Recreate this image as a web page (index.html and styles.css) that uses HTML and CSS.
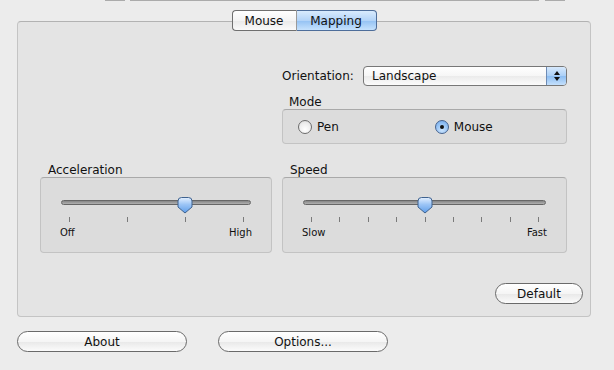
FILE: index.html
```html
<!DOCTYPE html>
<html lang="en">
<head>
  <meta charset="UTF-8" />
  <title>Mouse — Mapping</title>
  <link rel="stylesheet" href="styles.css">
</head>
<body>
  <!-- bottom edges of the controls above, cut off by the window -->
  <div class="top-edge">
    <span class="edge edge-a"></span>
    <span class="edge edge-b"></span>
    <span class="edge edge-c"></span>
  </div>

  <div class="tab-view">
    <div class="tabs">
      <button class="tab">Mouse</button>
      <button class="tab selected">Mapping</button>
    </div>

    <div class="tab-pane">
      <div class="pane-grid">
        <div></div>

        <div class="mapping">
          <div class="field-row">
            <span class="field-label">Orientation:</span>
            <div class="popup">
              <span class="popup-value">Landscape</span>
              <span class="popup-arrows">
                <svg width="8" height="12" viewBox="0 0 8 12">
                  <path d="M4 1 L7 5 H1 Z" fill="#111" />
                  <path d="M4 11 L7 7 H1 Z" fill="#111" />
                </svg>
              </span>
            </div>
          </div>

          <div class="group-label">Mode</div>
          <div class="group mode-group">
            <label class="radio"><span class="radio-dot"></span>Pen</label>
            <label class="radio"><span class="radio-dot checked"></span>Mouse</label>
          </div>
        </div>

        <div class="slider-block">
          <div class="group-label">Acceleration</div>
          <div class="group slider-group">
            <div class="slider">
              <div class="track"></div>
              <div class="rail">
                <svg class="thumb" style="left: 66.67%;" width="17" height="17" viewBox="0 0 17 17">
                  <defs>
                    <linearGradient id="thumbA" x1="0" y1="0" x2="0" y2="1">
                      <stop offset="0" stop-color="#e4f0ff" />
                      <stop offset="0.45" stop-color="#9cc5f6" />
                      <stop offset="1" stop-color="#5e9de9" />
                    </linearGradient>
                  </defs>
                  <path d="M1.5 4 Q1.5 0.5 5 0.5 H12 Q15.5 0.5 15.5 4 V10 L8.5 16 L1.5 10 Z" fill="url(#thumbA)" stroke="#3f628f" />
                </svg>
              </div>
            </div>
            <div class="ticks">
              <i></i><i></i><i></i><i></i>
            </div>
            <div class="slider-ends">
              <span>Off</span>
              <span>High</span>
            </div>
          </div>
        </div>

        <div class="slider-block">
          <div class="group-label">Speed</div>
          <div class="group slider-group">
            <div class="slider">
              <div class="track"></div>
              <div class="rail">
                <svg class="thumb" style="left: 50%;" width="17" height="17" viewBox="0 0 17 17">
                  <defs>
                    <linearGradient id="thumbS" x1="0" y1="0" x2="0" y2="1">
                      <stop offset="0" stop-color="#e4f0ff" />
                      <stop offset="0.45" stop-color="#9cc5f6" />
                      <stop offset="1" stop-color="#5e9de9" />
                    </linearGradient>
                  </defs>
                  <path d="M1.5 4 Q1.5 0.5 5 0.5 H12 Q15.5 0.5 15.5 4 V10 L8.5 16 L1.5 10 Z" fill="url(#thumbS)" stroke="#3f628f" />
                </svg>
              </div>
            </div>
            <div class="ticks">
              <i></i><i></i><i></i><i></i><i></i><i></i><i></i><i></i><i></i>
            </div>
            <div class="slider-ends">
              <span>Slow</span>
              <span>Fast</span>
            </div>
          </div>
        </div>
      </div>

      <div class="pane-footer">
        <button class="push default-btn">Default</button>
      </div>
    </div>
  </div>

  <div class="bottom-bar">
    <button class="push wide">About</button>
    <button class="push wide">Options...</button>
  </div>
</body>
</html>
```

FILE: styles.css
```css
* {
  box-sizing: border-box;
}

body {
  margin: 0;
  padding: 0;
  font-family: 'DejaVu Sans', 'Liberation Sans', sans-serif;
  font-size: 12px;
  color: #111;
  background-color: #ececec;
}

button {
  font-family: inherit;
  font-size: 12px;
  color: #111;
}

.top-edge {
  display: flex;
  height: 1px;
  padding-left: 105px;
}

.edge {
  height: 1px;
  background-color: #ababab;
}

.edge-a { width: 20px; }
.edge-b { width: 409px; margin-left: 5px; }
.edge-c { width: 20px; margin-left: 6px; }

.tab-view {
  width: 574px;
  margin: 9px 0 0 17px;
}

.tabs {
  position: relative;
  z-index: 1;
  display: flex;
  justify-content: center;
  margin-bottom: -10px;
}

.tab {
  height: 21px;
  padding: 0 12px;
  border: 1px solid #6f6f6f;
  background: linear-gradient(#ffffff, #f4f4f4 50%, #e9e9e9 51%, #fafafa);
  line-height: 18px;
}

.tab:first-child {
  width: 65px;
  border-radius: 4px 0 0 4px;
  border-right-color: #9a9a9a;
}

.tab.selected {
  width: 80px;
  border-left: none;
  border-color: #4d6d9a;
  border-radius: 0 4px 4px 0;
  background: linear-gradient(#d9ebfd, #b3d4f8 50%, #93c1f3 51%, #c6e2fd);
}

.tab-pane {
  border: 1px solid #c4c4c4;
  border-top-color: #b2b2b2;
  border-radius: 4px;
  background-color: #e4e4e4;
  padding: 44px 23px 12px 22px;
}

.pane-grid {
  display: grid;
  grid-template-columns: 232px 285px;
  column-gap: 10px;
  row-gap: 19px;
}

.field-row {
  display: flex;
  align-items: center;
  height: 20px;
}

.field-label {
  margin-right: auto;
}

.popup {
  display: flex;
  width: 204px;
  height: 20px;
  border: 1px solid #777;
  border-radius: 4px;
  overflow: hidden;
  background: linear-gradient(#ffffff, #f6f6f6 50%, #ebebeb 51%, #fbfbfb);
}

.popup-value {
  flex: 1;
  padding-left: 8px;
  line-height: 18px;
}

.popup-arrows {
  display: flex;
  align-items: center;
  justify-content: center;
  width: 20px;
  border-left: 1px solid #6d8bb5;
  background: linear-gradient(#d7e9fc, #aacff7 50%, #8cbdf2 51%, #c4e0fc);
}

.group-label {
  height: 14px;
  line-height: 14px;
  padding-left: 7px;
}

.mapping .group-label {
  margin-top: 9px;
}

.slider-block .group-label {
  padding-left: 8px;
}

.group {
  border: 1px solid #c3c3c3;
  border-top-color: #a9a9a9;
  border-radius: 4px;
  background-color: #dcdcdc;
}

.mode-group {
  display: flex;
  align-items: center;
  height: 35px;
  padding-left: 15px;
}

.radio {
  display: flex;
  align-items: center;
  gap: 5px;
}

.radio + .radio {
  margin-left: 96px;
}

.radio-dot {
  width: 14px;
  height: 14px;
  border: 1px solid #6c6c6c;
  border-radius: 50%;
  background: radial-gradient(circle at 50% 70%, #ffffff, #ececec 60%, #d6d6d6);
}

.radio-dot.checked {
  position: relative;
  border-color: #46628d;
  background: radial-gradient(circle at 50% 75%, #cbe4fd, #92c0f3 60%, #6fa6ea);
}

.radio-dot.checked::after {
  content: "";
  position: absolute;
  left: 4px;
  top: 4px;
  width: 4px;
  height: 4px;
  border-radius: 50%;
  background-color: #111;
}

.slider-group {
  height: 76px;
  padding: 19px 20px 0 20px;
}

.slider {
  position: relative;
  height: 17px;
}

.track {
  position: absolute;
  left: 0;
  right: 0;
  top: 3px;
  height: 5px;
  border: 1px solid #666;
  border-radius: 3px;
  background: linear-gradient(#858585, #b0b0b0);
}

.rail {
  position: absolute;
  left: 8px;
  right: 8px;
  top: 0;
  height: 17px;
}

.thumb {
  position: absolute;
  top: 0;
  transform: translateX(-8.5px);
}

.ticks {
  display: flex;
  justify-content: space-between;
  margin: 3px 7px 0 8px;
}

.ticks i {
  width: 1px;
  height: 5px;
  background-color: #7a7a7a;
}

.slider-ends {
  display: flex;
  justify-content: space-between;
  margin: 5px -1px 0 -1px;
  font-size: 10px;
  line-height: 12px;
}

.pane-footer {
  display: flex;
  justify-content: flex-end;
  margin: 30px -16px 0 0;
}

.push {
  height: 21px;
  border: 1px solid #6a6a6a;
  border-radius: 11px;
  background: linear-gradient(#ffffff, #f5f5f5 50%, #e8e8e8 51%, #fbfbfb);
  line-height: 18px;
  padding: 0;
}

.default-btn {
  width: 88px;
}

.bottom-bar {
  display: flex;
  gap: 31px;
  padding: 14px 0 0 17px;
}

.push.wide {
  width: 170px;
}
```
